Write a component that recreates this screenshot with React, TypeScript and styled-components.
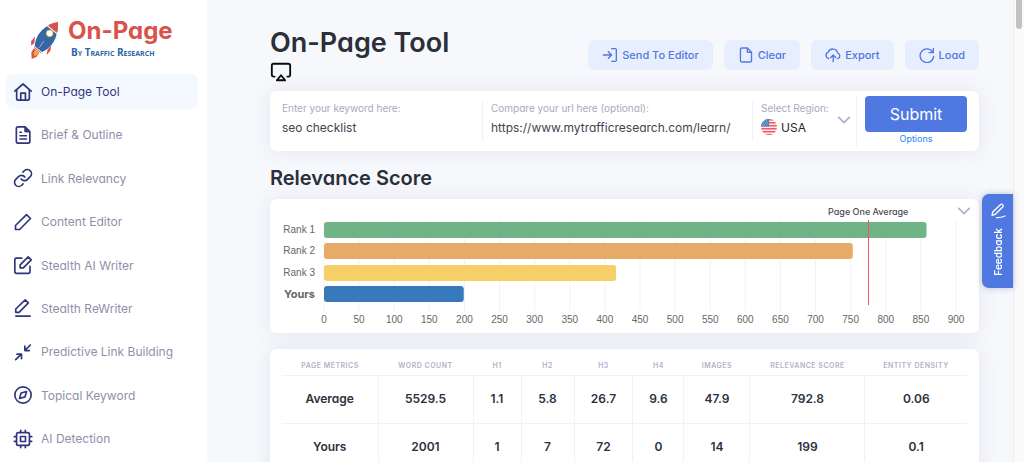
import React from "react";
import styled, { createGlobalStyle, css } from "styled-components";

const GlobalStyle = createGlobalStyle`
  *, *::before, *::after { box-sizing: border-box; }
  body {
    margin: 0;
    background: #f6f8fc;
    color: #2a2f3a;
    font-family: Inter, "Liberation Sans", sans-serif;
    font-feature-settings: "cv11" 1;
  }
  button, input, select { font: inherit; font-feature-settings: inherit; color: inherit; }
`;

/* ---------- page frame ---------- */

const Shell = styled.div`
  display: flex;
  height: 100vh;
  overflow: hidden;
`;

const Sidebar = styled.aside`
  flex: 0 0 207px;
  background: #fff;
  padding: 16px 9px 0 6px;
`;

const Main = styled.main`
  flex: 1;
  min-width: 0;
  padding: 25px 34px 0 63px;
`;

const ScrollTrack = styled.div`
  flex: 0 0 11px;
  background: #fafafa;
  border-left: 1px solid #ececee;
  padding: 0 2px;
`;

const ScrollThumb = styled.div`
  height: 29px;
  border-radius: 0 0 4px 4px;
  background: #c1c1c1;
`;

/* ---------- sidebar ---------- */

const Logo = styled.a`
  display: flex;
  align-items: flex-end;
  gap: 10px;
  height: 43px;
  padding-left: 25px;
  margin-bottom: 15px;
  text-decoration: none;
`;

const LogoText = styled.span`
  display: flex;
  flex-direction: column;
`;

const LogoName = styled.span`
  font-size: 24px;
  line-height: 29px;
  font-weight: 700;
  color: #d9534c;
`;

const LogoBy = styled.span`
  padding-left: 3px;
  font-family: "Open Sans", sans-serif;
  font-size: 10px;
  line-height: 14px;
  font-weight: 700;
  font-variant: small-caps;
  color: #2f66a8;
`;

const NavList = styled.ul`
  list-style: none;
  margin: 0;
  padding: 0;
  display: grid;
  align-content: space-between;
  height: 382px;
`;

const NavLink = styled.a<{ $active?: boolean }>`
  display: flex;
  align-items: center;
  gap: 8px;
  height: 35px;
  padding-left: 7px;
  border-radius: 7px;
  font-size: 12px;
  white-space: nowrap;
  text-decoration: none;
  color: ${(p) => (p.$active ? "#33377a" : "#8f8fac")};
  background: ${(p) => (p.$active ? "#f4f8ff" : "transparent")};
`;

const NavIcon = styled.svg`
  width: 20px;
  height: 20px;
  flex: none;
  fill: none;
  stroke: #2f367c;
  stroke-width: 2;
  stroke-linejoin: round;
  stroke-linecap: round;
`;

/* ---------- header ---------- */

const Header = styled.header`
  display: flex;
  justify-content: space-between;
  align-items: flex-start;
  height: 66px;
`;

const Title = styled.h1`
  margin: 0;
  font-size: 27px;
  line-height: 36px;
  font-weight: 600;
  white-space: nowrap;
`;

const AirplayIcon = styled.svg`
  display: block;
  width: 22px;
  height: 22px;
  fill: none;
  stroke: #0b0b0d;
  stroke-width: 2;
  stroke-linejoin: round;
  stroke-linecap: round;
`;

const Actions = styled.div`
  display: flex;
  gap: 11px;
  padding-top: 15px;
`;

const ActionButton = styled.button`
  display: flex;
  align-items: center;
  gap: 4px;
  height: 30px;
  padding: 0 14px;
  border: 0;
  border-radius: 6px;
  background: #e7eefe;
  color: #5079e0;
  font-size: 11px;
  font-weight: 500;
  white-space: nowrap;
`;

const ActionIcon = styled.svg`
  width: 16px;
  height: 16px;
  fill: none;
  stroke: currentColor;
  stroke-width: 2;
  stroke-linejoin: round;
  stroke-linecap: round;
`;

/* ---------- cards ---------- */

const card = css`
  background: #fff;
  border-radius: 7px;
  box-shadow: 0 0 20px rgba(86, 78, 140, 0.1);
`;

const SearchForm = styled.form`
  ${card}
  display: grid;
  grid-template-columns: 201fr 270fr 104px 110px;
  align-items: center;
  height: 60px;
  padding: 0 12px;
`;

const Field = styled.label<{ $first?: boolean }>`
  display: flex;
  flex-direction: column;
  height: 40px;
  min-width: 0;
  padding-left: ${(p) => (p.$first ? 0 : 8)}px;
  border-right: 1px solid #f0f0f5;
`;

const RegionField = styled.label`
  display: grid;
  grid-template-columns: 1fr 14px;
  align-items: center;
  height: 50px;
  padding: 0 5px 2px 8px;
  border-right: 1px solid #f0f0f5;
`;

const FieldLabel = styled.span`
  font-size: 10px;
  line-height: 14px;
  color: #aaa8c3;
  white-space: nowrap;
`;

const TextInput = styled.input`
  width: 100%;
  height: 25px;
  padding: 0;
  border: 0;
  outline: 0;
  background: transparent;
  font-size: 12px;
  color: #3f444e;
`;

const RegionStack = styled.span`
  display: flex;
  flex-direction: column;
  min-width: 0;
`;

const RegionRow = styled.span`
  display: flex;
  align-items: center;
  gap: 4px;
  height: 24px;
`;

const RegionSelect = styled.select`
  flex: 1;
  min-width: 0;
  padding: 0;
  border: 0;
  outline: 0;
  appearance: none;
  background: transparent;
  font-size: 12px;
  color: #1f242e;
`;

const Flag = styled.svg`
  width: 16px;
  height: 16px;
  flex: none;
`;

const Chevron = styled.svg`
  display: block;
  width: 14px;
  height: 14px;
  flex: none;
  fill: none;
  stroke: #b3b1cb;
  stroke-width: 2;
  stroke-linecap: round;
  stroke-linejoin: round;
`;

const SubmitCell = styled.div`
  display: flex;
  flex-direction: column;
  align-items: stretch;
  padding-left: 8px;
`;

const SubmitButton = styled.button`
  height: 36px;
  border: 0;
  border-radius: 4px;
  background: #4f78e1;
  color: #fff;
  font-size: 16px;
`;

const OptionsLink = styled.a`
  text-align: center;
  font-size: 9px;
  line-height: 14px;
  color: #1a86f5;
  text-decoration: none;
`;

const SectionTitle = styled.h2`
  margin: 13px 0 7px;
  font-size: 20px;
  line-height: 28px;
  font-weight: 600;
`;

/* ---------- chart ---------- */

const ChartCard = styled.section`
  ${card}
  position: relative;
  height: 134px;
  padding: 21px 23px 0 13px;
  display: grid;
  grid-template-columns: 41px 1fr;
  align-content: start;
`;

const CollapseButton = styled.button`
  position: absolute;
  top: 5px;
  right: 8px;
  padding: 0;
  border: 0;
  background: none;
`;

const RankLabels = styled.ul`
  list-style: none;
  margin: 0;
  padding: 0;
  display: flex;
  flex-direction: column;
  height: 84px;
  justify-content: space-between;
`;

const RankLabel = styled.li<{ $own?: boolean }>`
  padding-right: 9px;
  text-align: right;
  font-family: ${(p) => (p.$own ? "Inter" : '"Liberation Sans"')}, sans-serif;
  font-size: ${(p) => (p.$own ? 11 : 10)}px;
  line-height: 20px;
  font-weight: ${(p) => (p.$own ? 700 : 400)};
  white-space: nowrap;
  color: #666;
`;

const Plot = styled.svg`
  display: block;
  width: 100%;
  height: 110px;
  overflow: visible;
`;

const TickText = styled.text`
  font-family: "Liberation Sans", sans-serif;
  font-size: 10px;
  text-anchor: middle;
  fill: #666;
`;

const AverageText = styled.text`
  font-size: 9px;
  font-weight: 500;
  text-anchor: middle;
  fill: #4b4b52;
`;

/* ---------- metrics table ---------- */

const TableCard = styled.section`
  ${card}
  margin-top: 16px;
  padding: 6px 12px 12px;
`;

const MetricsTable = styled.table`
  width: 100%;
  table-layout: fixed;
  border-collapse: collapse;
`;

const HeadCell = styled.th`
  height: 20px;
  padding: 1px 0 0;
  border-bottom: 1px solid #f1f1f7;
  font-size: 7px;
  font-weight: 600;
  letter-spacing: 0.5px;
  text-transform: uppercase;
  white-space: nowrap;
  color: #b3b0cb;
`;

const cell = css`
  height: 48px;
  padding: 0 0 1px;
  border-bottom: 1px solid #f1f1f7;
  font-size: 12px;
  font-weight: 600;
  text-align: center;
  color: #2c313c;
`;

const RowHead = styled.th`
  ${cell}
`;

const Cell = styled.td`
  ${cell}
  border-left: 1px solid #f1f1f7;
`;

/* ---------- feedback tab ---------- */

const FeedbackTab = styled.button`
  position: fixed;
  top: 194px;
  right: 11px;
  display: flex;
  flex-direction: column;
  align-items: center;
  gap: 9px;
  width: 31px;
  height: 94px;
  padding: 9px 0 0;
  border: 0;
  border-radius: 7px 0 0 7px;
  background: #4f78e1;
  box-shadow: 0 0 6px rgba(60, 60, 120, 0.3);
  color: #fff;
`;

const FeedbackText = styled.span`
  writing-mode: vertical-rl;
  transform: rotate(180deg);
  font-size: 10px;
  line-height: 14px;
  font-weight: 600;
`;

/* ---------- data ---------- */

const icons: Record<string, React.ReactNode> = {
  home: (
    <>
      <path d="M2.2 11 12 2.4 21.8 11" />
      <path d="M4.4 9.5v10.3a2 2 0 0 0 2 2h11.2a2 2 0 0 0 2-2V9.5" />
      <path d="M9.3 21.5v-8.2h5.6v8.2" />
    </>
  ),
  brief: (
    <>
      <path d="M14.5 2.3H6a2 2 0 0 0-2 2v15.5a2 2 0 0 0 2 2h12.2a2 2 0 0 0 2-2V8z" />
      <path d="M14.2 3v5.3H20z" fill="#2f367c" strokeWidth="1.2" />
      <path d="M8.3 8.8h1.8M8.3 12.8h7.9M8.3 16.8h7.9" strokeWidth="1.8" />
    </>
  ),
  link: (
    <>
      <path d="M9.8 13.2a5 5 0 0 0 7.6.5l3.3-3.3a5 5 0 0 0-7.1-7.1L11.9 5" />
      <path d="M14.2 10.8a5 5 0 0 0-7.6-.5l-3.3 3.3a5 5 0 0 0 7.1 7.1l1.7-1.7" />
    </>
  ),
  pencil: <path d="M16.2 3.2 21 7.8 8 21H3v-4.8z" />,
  edit: (
    <>
      <path d="M10.5 3.8H4a1.8 1.8 0 0 0-1.8 1.8v14.6A1.8 1.8 0 0 0 4 22h14.6a1.8 1.8 0 0 0 1.8-1.8V13.5" />
      <path d="M18.2 2.2l3.7 3.6-9.5 9.7H8.6v-3.7z" />
    </>
  ),
  rewrite: (
    <>
      <path d="M14.6 2.2l3.8 3.7L7.3 17.2H3.3v-4z" />
      <path d="M3.3 21.7h17.3" />
    </>
  ),
  merge: (
    <>
      <path d="M20.8 3.6 15 9.4M14.2 4.8v5.5h5.4" />
      <path d="M3.2 21.2 9 15.4M4.8 14.6h5.4v5.5" />
    </>
  ),
  compass: (
    <>
      <circle cx="12" cy="12" r="9.8" />
      <path d="M16.2 7.8l-1.8 6.5-6.6 1.9 1.9-6.6z" />
    </>
  ),
  chip: (
    <>
      <rect x="4.3" y="4.3" width="15.4" height="15.4" rx="2" />
      <rect x="9" y="9" width="6" height="6" />
      <path d="M9.2 1.5V4M14.8 1.5V4M9.2 20v2.5M14.8 20v2.5M1.5 9.2H4M1.5 14.8H4M20 9.2h2.5M20 14.8h2.5" />
    </>
  ),
};

const navItems = [
  ["home", "On-Page Tool"],
  ["brief", "Brief & Outline"],
  ["link", "Link Relevancy"],
  ["pencil", "Content Editor"],
  ["edit", "Stealth AI Writer"],
  ["rewrite", "Stealth ReWriter"],
  ["merge", "Predictive Link Building"],
  ["compass", "Topical Keyword"],
  ["chip", "AI Detection"],
];

const actions: { label: string; icon: React.ReactNode }[] = [
  {
    label: "Send To Editor",
    icon: <path d="M2 12h12.5M9.5 7l5 5-5 5M14.5 2.5H20A1.5 1.5 0 0 1 21.5 4v16a1.5 1.5 0 0 1-1.5 1.5h-5.5" />,
  },
  {
    label: "Clear",
    icon: <path d="M14 1.5H5.5a1.8 1.8 0 0 0-1.8 1.8v17.4a1.8 1.8 0 0 0 1.8 1.8h13a1.8 1.8 0 0 0 1.8-1.8V8zM14 2v6h6" />,
  },
  {
    label: "Export",
    icon: (
      <>
        <path d="M5.5 17.5a5.2 5.2 0 0 1-.8-9.8A7.5 7.5 0 0 1 19 9.2a4.3 4.3 0 0 1 .2 8.3" />
        <path d="M12.3 22v-9.5M8.3 16l4-4 4 4" />
      </>
    ),
  },
  {
    label: "Load",
    icon: <path d="M21.5 2v6.5H15M20.7 8A10.2 10.2 0 1 0 22 14" />,
  },
];

const AXIS_MAX = 900;
const AVERAGE = 775;
const ticks = Array.from({ length: 19 }, (_, i) => i * 50);
const bars = [
  { label: "Rank 1", value: 858, y: 2, color: "#6fb387" },
  { label: "Rank 2", value: 753, y: 23, color: "#e7ab68" },
  { label: "Rank 3", value: 416, y: 45, color: "#f5d068" },
  { label: "Yours", value: 199, y: 66, color: "#3779bb", own: true },
];
const percent = (value: number) => `${(value / AXIS_MAX) * 100}%`;

const columns: [string, number][] = [
  ["Page Metrics", 96],
  ["Word Count", 95],
  ["H1", 48],
  ["H2", 53],
  ["H3", 59],
  ["H4", 51],
  ["Images", 66],
  ["Relevance Score", 115],
  ["Entity Density", 102],
];
const rows = [
  ["Average", "5529.5", "1.1", "5.8", "26.7", "9.6", "47.9", "792.8", "0.06"],
  ["Yours", "2001", "1", "7", "72", "0", "14", "199", "0.1"],
];

const Rocket = () => (
  <svg width="27" height="37" viewBox="0 0 81 111" aria-hidden="true">
    <path d="M12 44 0 58l1 13 9-8zM47 96l3-14 11-11-3 15-10 12z" fill="#d9534c" />
    <path d="M9 79 1 91l1 20 14-6 9-12z" fill="#d9534c" />
    <path d="M13 84 7 93l4 10 9-5 4-7z" fill="#f8a62c" />
    <path d="M81 0C69 1 59 5 51 11l27 22c4-10 4-22 3-33z" fill="#d9534c" />
    <path d="M48 13C27 26 13 47 11 73l22 17C58 80 72 58 77 36z" fill="#3567a5" />
    <path d="M9 76l22 17" stroke="#d9534c" strokeWidth="3" />
    <circle cx="56" cy="34" r="10" fill="#fff" stroke="#e5b54e" strokeWidth="3" />
    <path d="M38 57 25 77" stroke="#cfdcee" strokeWidth="2" fill="none" />
  </svg>
);

const UsFlag = () => (
  <Flag viewBox="0 0 16 16" aria-hidden="true">
    <clipPath id="flag-round">
      <circle cx="8" cy="8" r="8" />
    </clipPath>
    <g clipPath="url(#flag-round)">
      <rect width="16" height="16" fill="#fbe9ea" />
      {[0, 1, 2, 3, 4, 5].map((i) => (
        <rect key={i} y={i * 3} width="16" height="1.5" fill="#ee5a68" />
      ))}
      <rect width="8" height="7.5" fill="#4a83b8" />
      <path d="M3 2h4M2 4h5M1 6h6" stroke="#b9d2e6" strokeWidth="0.7" strokeDasharray="1 1" />
    </g>
  </Flag>
);

const ChevronDown = () => (
  <Chevron viewBox="0 0 16 16" aria-hidden="true">
    <path d="M2 5l6 6 6-6" />
  </Chevron>
);

export default function App() {
  return (
    <>
      <GlobalStyle />
      <Shell>
        <Sidebar>
          <Logo href="#">
            <Rocket />
            <LogoText>
              <LogoName>On-Page</LogoName>
              <LogoBy>By Traffic Research</LogoBy>
            </LogoText>
          </Logo>
          <nav>
            <NavList>
              {navItems.map(([icon, label], i) => (
                <li key={label}>
                  <NavLink href="#" $active={i === 0}>
                    <NavIcon viewBox="0 0 24 24" aria-hidden="true">
                      {icons[icon]}
                    </NavIcon>
                    {label}
                  </NavLink>
                </li>
              ))}
            </NavList>
          </nav>
        </Sidebar>

        <Main>
          <Header>
            <div>
              <Title>On-Page Tool</Title>
              <AirplayIcon viewBox="0 0 24 24" aria-hidden="true">
                <path d="M5 17H4a2 2 0 0 1-2-2V5a2 2 0 0 1 2-2h16a2 2 0 0 1 2 2v10a2 2 0 0 1-2 2h-1" />
                <path d="M12 15.5l4.5 5.5h-9z" />
              </AirplayIcon>
            </div>
            <Actions>
              {actions.map((a) => (
                <ActionButton key={a.label} type="button">
                  <ActionIcon viewBox="0 0 24 24" aria-hidden="true">
                    {a.icon}
                  </ActionIcon>
                  {a.label}
                </ActionButton>
              ))}
            </Actions>
          </Header>

          <SearchForm onSubmit={(e) => e.preventDefault()}>
            <Field $first>
              <FieldLabel>Enter your keyword here:</FieldLabel>
              <TextInput type="text" defaultValue="seo checklist" />
            </Field>
            <Field>
              <FieldLabel>Compare your url here (optional):</FieldLabel>
              <TextInput type="text" defaultValue="https://www.mytrafficresearch.com/learn/" />
            </Field>
            <RegionField>
              <RegionStack>
                <FieldLabel>Select Region:</FieldLabel>
                <RegionRow>
                  <UsFlag />
                  <RegionSelect defaultValue="USA">
                    <option>USA</option>
                  </RegionSelect>
                </RegionRow>
              </RegionStack>
              <ChevronDown />
            </RegionField>
            <SubmitCell>
              <SubmitButton type="submit">Submit</SubmitButton>
              <OptionsLink href="#">Options</OptionsLink>
            </SubmitCell>
          </SearchForm>

          <SectionTitle>Relevance Score</SectionTitle>
          <ChartCard>
            <RankLabels>
              {bars.map((b) => (
                <RankLabel key={b.label} $own={b.own}>
                  {b.label}
                </RankLabel>
              ))}
            </RankLabels>
            <Plot role="img" aria-label="Relevance score by rank">
              {ticks.map((t) => (
                <React.Fragment key={t}>
                  <line x1={percent(t)} x2={percent(t)} y1="0" y2="91" stroke="#f3f3f5" />
                  <TickText x={percent(t)} y="103">
                    {t}
                  </TickText>
                </React.Fragment>
              ))}
              {bars.map((b) => (
                <rect key={b.label} x="0" y={b.y} width={percent(b.value)} height="16" rx="3" fill={b.color} />
              ))}
              <line x1={percent(AVERAGE)} x2={percent(AVERAGE)} y1="0" y2="85" stroke="#f2526e" shapeRendering="crispEdges" />
              <AverageText x={percent(AVERAGE)} y="-5">
                Page One Average
              </AverageText>
            </Plot>
            <CollapseButton type="button" aria-label="Collapse chart">
              <ChevronDown />
            </CollapseButton>
          </ChartCard>

          <TableCard>
            <MetricsTable>
              <colgroup>
                {columns.map(([name, width]) => (
                  <col key={name} style={{ width: `${(width / 685) * 100}%` }} />
                ))}
              </colgroup>
              <thead>
                <tr>
                  {columns.map(([name]) => (
                    <HeadCell key={name} scope="col">
                      {name}
                    </HeadCell>
                  ))}
                </tr>
              </thead>
              <tbody>
                {rows.map(([name, ...values]) => (
                  <tr key={name}>
                    <RowHead scope="row">{name}</RowHead>
                    {values.map((v, i) => (
                      <Cell key={columns[i + 1][0]}>{v}</Cell>
                    ))}
                  </tr>
                ))}
              </tbody>
            </MetricsTable>
          </TableCard>
        </Main>

        <ScrollTrack>
          <ScrollThumb />
        </ScrollTrack>
      </Shell>

      <FeedbackTab type="button">
        <svg width="16" height="16" viewBox="0 0 24 24" fill="none" stroke="currentColor" strokeWidth="2" strokeLinejoin="round" strokeLinecap="round" aria-hidden="true">
          <path d="M15.5 2.5a2.5 2.5 0 0 1 3.6 3.5L8 17l-5 1.5 1.2-5z" />
          <path d="M10 22c4 .3 8-.5 12.5-2.5" />
        </svg>
        <FeedbackText>Feedback</FeedbackText>
      </FeedbackTab>
    </>
  );
}
